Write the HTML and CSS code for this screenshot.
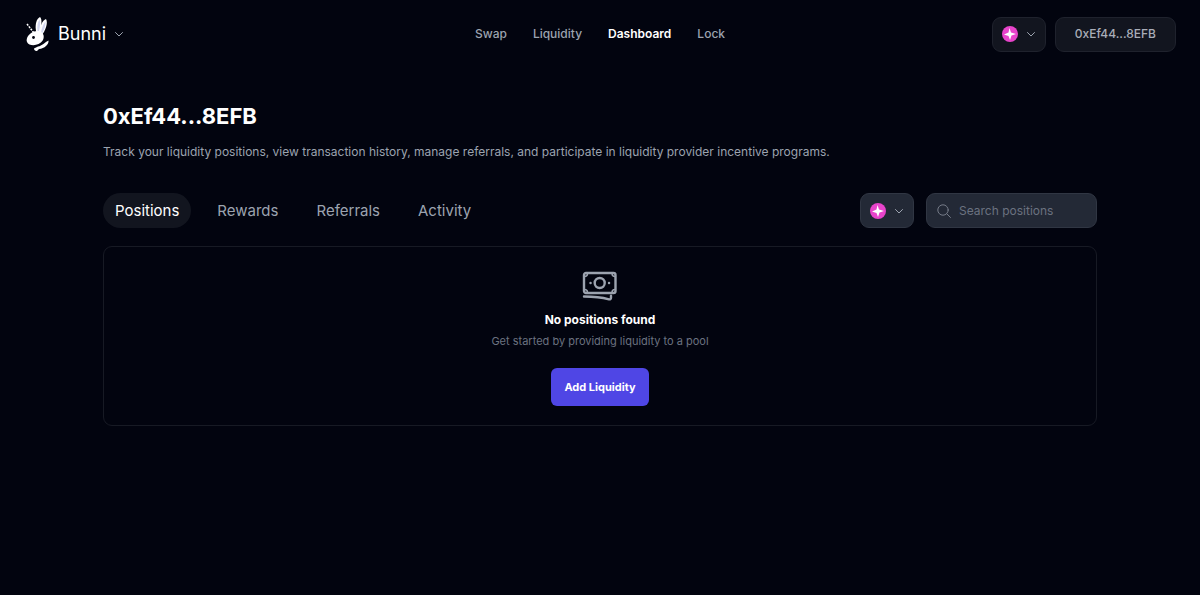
FILE: index.html
```html
<!DOCTYPE html>
<html lang="en">
<head>
<meta charset="UTF-8">
<meta name="viewport" content="width=device-width, initial-scale=1.0">
<title>Bunni</title>
<link rel="stylesheet" href="styles.css">
</head>
<body>
<header class="header">
  <div class="header-left">
    <button type="button" class="brand">
      <svg class="logo" viewBox="0 0 26 36" aria-hidden="true">
        <path d="M3 8l7 9" fill="none" stroke="#fff" stroke-width="1.500" stroke-dasharray="2 1"/>
        <path d="M12.500 17C10.500 10 12 3 16 1c2.500 2 1.500 10-.5 16z" fill="#fff"/>
        <path d="M15 18c.5-7 3.500-14 7-15 2.500 4-1 12-4 16z" fill="#fff"/>
        <path d="M13.500 15c-.5-5 .2-9 2-11.500 1.200 3 .5 7-.5 11.500zM17 17c.5-4 2-9 4.500-11.500 .4 4-1.500 8.500-3.200 11.500z" fill="#d3d7f0"/>
        <path d="M10 15.500c4-1.500 8.500 0 9.500 3.500 1 4-1.500 7.500-5 9-4 2-10 1.500-11.500-2-1.500-4 2.500-9 7-10.500z" fill="#fff"/>
        <circle cx="9.500" cy="21.500" r="1.400" fill="#02040f"/>
        <path d="M24.500 24.500c.5 4-4 8-9.500 8.500l-2 2c-1.500.5-3-1-3-2.500l4-2c4-.5 7-4.500 10.500-6z" fill="#fff"/>
      </svg>
      <span>Bunni</span>
      <svg class="chevron" viewBox="0 0 10 10" aria-hidden="true"><path d="M1.500 3.500l3.500 3.500 3.500-3.500"/></svg>
    </button>
  </div>
  <nav class="nav">
    <a href="#">Swap</a>
    <a href="#">Liquidity</a>
    <a href="#" class="active">Dashboard</a>
    <a href="#">Lock</a>
  </nav>
  <div class="header-right">
    <button type="button" class="network" aria-label="Select network">
      <svg class="token" viewBox="0 0 16 16" aria-hidden="true">
        <circle cx="8" cy="8" r="8" fill="#e844cb"/>
        <path d="M7.500 2l1.500 4.500 5 1.500-4.500 1.500-1.500 4.500-1.500-4-4.500-1.500 4.500-2z" fill="#fff"/>
      </svg>
      <svg class="chevron" viewBox="0 0 10 10" aria-hidden="true"><path d="M1.500 3.500l3.500 3.500 3.500-3.500"/></svg>
    </button>
    <button type="button" class="wallet">0xEf44...8EFB</button>
  </div>
</header>

<main class="main">
  <h1>0xEf44...8EFB</h1>
  <p class="intro">Track your liquidity positions, view transaction history, manage referrals, and participate in liquidity provider incentive programs.</p>

  <div class="toolbar">
    <div class="tabs" role="tablist">
      <button type="button" class="tab selected" role="tab" aria-selected="true">Positions</button>
      <button type="button" class="tab" role="tab" aria-selected="false">Rewards</button>
      <button type="button" class="tab" role="tab" aria-selected="false">Referrals</button>
      <button type="button" class="tab" role="tab" aria-selected="false">Activity</button>
    </div>
    <div class="filters">
      <button type="button" class="network filled" aria-label="Filter by network">
        <svg class="token" viewBox="0 0 16 16" aria-hidden="true">
          <circle cx="8" cy="8" r="8" fill="#e844cb"/>
          <path d="M7.500 2l1.500 4.500 5 1.500-4.500 1.500-1.500 4.500-1.500-4-4.500-1.500 4.500-2z" fill="#fff"/>
        </svg>
        <svg class="chevron" viewBox="0 0 10 10" aria-hidden="true"><path d="M1.500 3.500l3.500 3.500 3.500-3.500"/></svg>
      </button>
      <label class="search">
        <svg viewBox="0 0 14 14" aria-hidden="true"><circle cx="6" cy="6" r="5.200"/><path d="M9.800 9.800l3.700 3.700"/></svg>
        <input type="text" placeholder="Search positions" aria-label="Search positions">
      </label>
    </div>
  </div>

  <section class="empty">
    <svg class="cash" viewBox="0 0 36 30" aria-hidden="true">
      <rect x="2" y="2" width="31.500" height="20" rx="2"/>
      <circle cx="17.700" cy="12" r="5"/>
      <path d="M2.500 5.500q3 0 3-3M30 2.500q0 3 3 3M2.500 18.500q3 0 3 3M30 21.500q0-3 3-3" class="corner"/>
      <path d="M8.500 12h.1M27 12h.1M2 25.500c9 0 17.500.8 25 2.800 1.200.3 2-.5 2-1.500v-2"/>
    </svg>
    <h2>No positions found</h2>
    <p>Get started by providing liquidity to a pool</p>
    <button type="button" class="add">Add Liquidity</button>
  </section>
</main>
</body>
</html>
```
FILE: styles.css
```css
* {
  box-sizing: border-box;
}
body {
  margin: 0;
  background: #02040f;
  color: #fff;
  font-family: Inter, "Liberation Sans", sans-serif;
  font-size: 12px;
  line-height: 20px;
}
button, input {
  font: inherit;
  color: inherit;
}
button {
  border: none;
  background: none;
  padding: 0;
  cursor: pointer;
}
h1, h2, p {
  margin: 0;
}

/* Header */
.header {
  display: grid;
  grid-template-columns: 1fr auto 1fr;
  align-items: center;
  padding: 16px 24px;
}
.brand {
  display: flex;
  align-items: center;
  gap: 8px;
  font-size: 18px;
}
.logo {
  width: 26px;
  height: 36px;
}
.chevron {
  width: 10px;
  height: 10px;
  fill: none;
  stroke: #9ca3af;
  stroke-linecap: round;
  stroke-linejoin: round;
}
.nav {
  display: flex;
  gap: 26px;
  font-weight: 500;
}
.nav a {
  color: #9ca3af;
  text-decoration: none;
}
.nav .active {
  color: #fff;
  font-weight: 600;
}
.header-right {
  display: flex;
  justify-content: flex-end;
  gap: 9px;
}
.network {
  display: flex;
  align-items: center;
  justify-content: center;
  gap: 8px;
  width: 54px;
  height: 35px;
  border: 1px solid #1f222d;
  border-radius: 9px;
  background: #12151f;
}
.token {
  width: 16px;
  height: 16px;
}
.wallet {
  height: 35px;
  padding: 0 19px;
  border: 1px solid #1f222d;
  border-radius: 9px;
  background: #12151f;
  color: #a9adb8;
  font-weight: 500;
}

/* Dashboard */
.main {
  max-width: 1042px;
  margin: 0 auto;
  padding: 32px 24px;
}
h1 {
  font-size: 22px;
  line-height: 32px;
  font-weight: 700;
}
.intro {
  margin-top: 10px;
  color: #9ca3af;
}
.toolbar {
  display: flex;
  justify-content: space-between;
  align-items: center;
  margin: 31px 0 18px;
}
.tabs {
  display: flex;
  gap: 14px;
}
.tab {
  height: 35px;
  padding: 0 12px;
  border-radius: 18px;
  color: #9ca3af;
  font-size: 15px;
}
.tab.selected {
  background: #12151f;
  color: #fff;
}
.filters {
  display: flex;
  gap: 12px;
}
.filled {
  border-color: #303643;
  background: #232936;
}
.search {
  display: flex;
  align-items: center;
  gap: 8px;
  width: 171px;
  height: 35px;
  padding: 0 10px;
  border: 1px solid #303643;
  border-radius: 9px;
  background: #232936;
}
.search svg {
  flex: none;
  width: 14px;
  height: 14px;
  fill: none;
  stroke: #757b88;
  stroke-linecap: round;
}
.search input {
  width: 100%;
  min-width: 0;
  padding: 0;
  border: none;
  outline: none;
  background: transparent;
}
.search input::placeholder {
  color: #6b7280;
  opacity: 1;
}

/* Empty state */
.empty {
  display: flex;
  flex-direction: column;
  align-items: center;
  padding: 24px 24px 19px;
  border: 1px solid #171a24;
  border-radius: 9px;
  text-align: center;
}
.cash {
  width: 36px;
  height: 30px;
  fill: none;
  stroke: #9ca3af;
  stroke-width: 2.4;
  stroke-linecap: round;
  stroke-linejoin: round;
}
.cash .corner {
  stroke-width: 1.5;
}
.empty h2 {
  margin-top: 9px;
  font-size: 12px;
  font-weight: 700;
}
.empty p {
  margin-top: 1px;
  color: #6b7280;
  font-size: 11px;
}
.add {
  height: 38px;
  margin-top: 17px;
  padding: 0 13px;
  border-radius: 6px;
  background: #4f46e5;
  font-size: 11px;
  font-weight: 700;
}
```
